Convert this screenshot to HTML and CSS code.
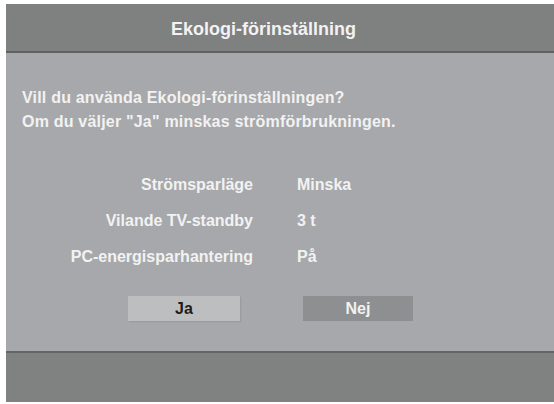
FILE: index.html
```html
<!DOCTYPE html>
<html lang="sv">

<head>
    <meta charset="UTF-8">
    <title>Ekologi-förinställning</title>
    <link rel="stylesheet" href="styles.css">
</head>

<body>
    <div class="panel">
        <div class="header">Ekologi-förinställning</div>
        <div class="main">
            <div class="question">
                <div>Vill du använda Ekologi-förinställningen?</div>
                <div>Om du väljer "Ja" minskas strömförbrukningen.</div>
            </div>
            <div class="settings">
                <div class="label">Strömsparläge</div>
                <div class="value">Minska</div>
                <div class="label">Vilande TV-standby</div>
                <div class="value">3 t</div>
                <div class="label">PC-energisparhantering</div>
                <div class="value">På</div>
            </div>
            <div class="buttons">
                <button class="btn yes">Ja</button>
                <button class="btn no">Nej</button>
            </div>
        </div>
        <div class="footer"></div>
    </div>
</body>

</html>
```

FILE: styles.css
```css
* {
    box-sizing: border-box;
}

body {
    margin: 0;
    background-color: #fff;
    font-family: 'Liberation Sans', Arial, sans-serif;
    font-weight: bold;
    color: #f2f2f2;
}

.panel {
    margin: 4px 0 0 6px;
    height: 398px;
    display: flex;
    flex-direction: column;
}

.header {
    height: 49px;
    background-color: #7f8080;
    border-bottom: 2px solid #606162;
    text-align: center;
    font-size: 18px;
    line-height: 51px;
    padding-right: 33px;
}

.main {
    height: 300px;
    background-color: #a7a8ab;
    padding: 33px 0 0 16px;
    border-bottom: 2px solid #646566;
}

.question {
    font-size: 16px;
    line-height: 24px;
    letter-spacing: 0.2px;
}

.settings {
    display: grid;
    grid-template-columns: 231px auto;
    column-gap: 44px;
    row-gap: 18px;
    margin-top: 42px;
    font-size: 16px;
    line-height: 18px;
}

.label {
    text-align: right;
}

.buttons {
    display: flex;
    margin-top: 30px;
    padding-left: 106px;
    gap: 63px;
}

.btn {
    width: 112px;
    height: 25px;
    border: none;
    font-family: inherit;
    font-weight: bold;
    font-size: 16px;
    padding: 0;
}

.yes {
    background-color: #bdbec0;
    color: #1e1e1e;
    box-shadow: 1px 1px 1px #9a9b9e;
}

.no {
    width: 110px;
    background-color: #8e8f91;
    color: #f2f2f2;
}

.footer {
    flex: 1;
    background-color: #808181;
}
```
